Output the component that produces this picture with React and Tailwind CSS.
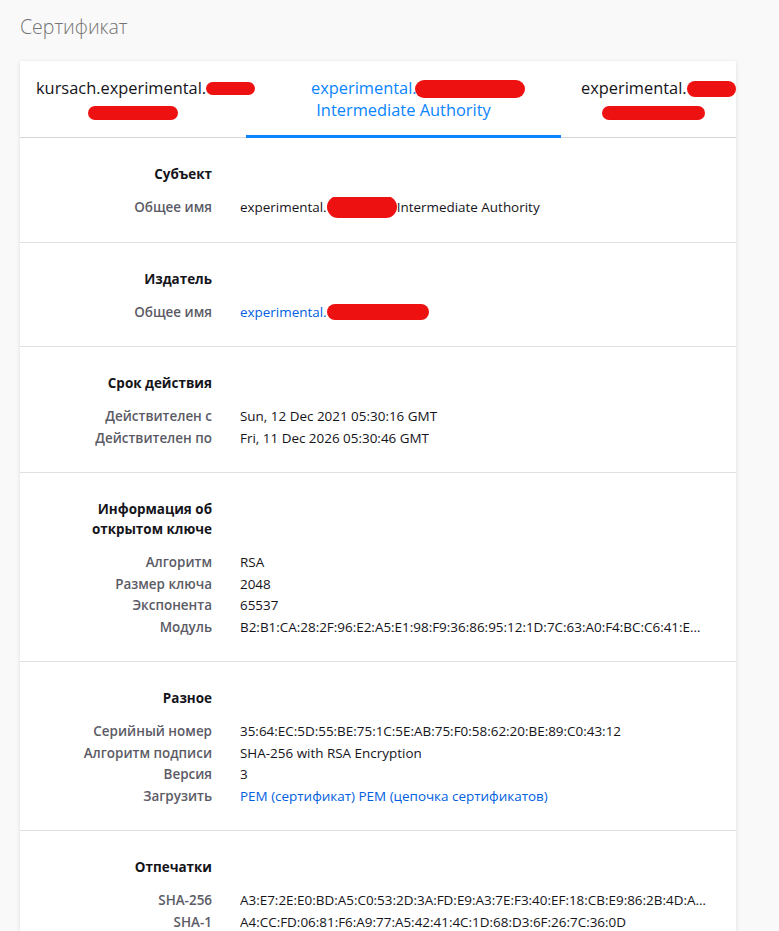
const Blot = ({ w, h = 14, className = '' }) => (
  <span
    className={`inline-block rounded-full bg-[#ee1111] blur-[0.6px] align-middle ${className}`}
    style={{ width: w, height: h }}
  />
)

function Row({ label, children }) {
  return (
    <>
      <div className="text-right font-semibold text-[#5b5b66]">{label}</div>
      <div className="min-w-0 truncate text-[#15141a]">{children}</div>
    </>
  )
}

function Section({ title, children }) {
  return (
    <div className="border-b border-[#e0e0e2] pt-[26px] pb-[23px] pr-[30px]">
      <div className="grid grid-cols-[192px_1fr] gap-x-[28px]">
        <div className="text-right font-bold leading-[20px] text-[#15141a]">{title}</div>
        <div />
      </div>
      <div className="mt-[13px] grid grid-cols-[192px_minmax(0,1fr)] gap-x-[28px] leading-[21.5px]">
        {children}
      </div>
    </div>
  )
}

export default function App() {
  return (
    <div
      className="min-h-screen bg-[#f9f9fa] px-[20px] pt-[12px] text-[13.45px]"
      style={{ fontFamily: '"Open Sans", "Noto Sans", sans-serif' }}
    >
      <h1 className="text-[19.5px] font-light leading-[30px] text-[#737373]">Сертификат</h1>

      <div className="mt-[19px] w-[716px] bg-white shadow-[0_1px_4px_rgba(12,12,13,0.12)]">
        {/* вкладки */}
        <div className="flex border-b border-[#d7d7db] text-[16.4px] leading-[22px]">
          <div className="w-[226px] py-[16px]">
            <div className="whitespace-nowrap pl-[16px] text-[#15141a]">
              kursach.experimental.<Blot w={49} h={13} className="-mt-[2px]" />
            </div>
            <div className="text-center">
              <Blot w={90} h={14} className="mt-[2px]" />
            </div>
          </div>
          <div className="relative w-[315px] py-[16px] text-[#0a84ff]">
            <div className="whitespace-nowrap pl-[65px]">
              experimental.<Blot w={110} h={18} className="-ml-[2px] -mt-[2px]" />
            </div>
            <div className="text-center">Intermediate Authority</div>
            <div className="absolute right-0 -bottom-px left-0 h-[3px] bg-[#0a84ff]" />
          </div>
          <div className="flex-1 py-[16px] text-[#15141a]">
            <div className="whitespace-nowrap pl-[20px]">
              experimental.<Blot w={49} h={16} className="-mt-[2px]" />
            </div>
            <div className="pl-[41px]">
              <Blot w={103} h={14} className="mt-[2px]" />
            </div>
          </div>
        </div>

        <Section title="Субъект">
          <Row label="Общее имя">
            experimental.
            <Blot w={70} h={22} className="-mt-[2px]" />
            Intermediate Authority
          </Row>
        </Section>

        <Section title="Издатель">
          <Row label="Общее имя">
            <span className="text-[#0060df]">experimental.</span>
            <Blot w={102} h={16} className="-mt-[1px]" />
          </Row>
        </Section>

        <Section title="Срок действия">
          <Row label="Действителен с">Sun, 12 Dec 2021 05:30:16 GMT</Row>
          <Row label="Действителен по">Fri, 11 Dec 2026 05:30:46 GMT</Row>
        </Section>

        <Section
          title={
            <>
              Информация об
              <br />
              открытом ключе
            </>
          }
        >
          <Row label="Алгоритм">RSA</Row>
          <Row label="Размер ключа">2048</Row>
          <Row label="Экспонента">65537</Row>
          <Row label="Модуль">
            B2:B1:CA:28:2F:96:E2:A5:E1:98:F9:36:86:95:12:1D:7C:63:A0:F4:BC:C6:41:E7:5A:90:3D:11:C4:8B
          </Row>
        </Section>

        <Section title="Разное">
          <Row label="Серийный номер">35:64:EC:5D:55:BE:75:1C:5E:AB:75:F0:58:62:20:BE:89:C0:43:12</Row>
          <Row label="Алгоритм подписи">SHA-256 with RSA Encryption</Row>
          <Row label="Версия">3</Row>
          <Row label="Загрузить">
            <span className="text-[#0060df]">PEM (сертификат) PEM (цепочка сертификатов)</span>
          </Row>
        </Section>

        <Section title="Отпечатки">
          <Row label="SHA-256">
            A3:E7:2E:E0:BD:A5:C0:53:2D:3A:FD:E9:A3:7E:F3:40:EF:18:CB:E9:86:2B:4D:A1:77:0C:E2:9B
          </Row>
          <Row label="SHA-1">A4:CC:FD:06:81:F6:A9:77:A5:42:41:4C:1D:68:D3:6F:26:7C:36:0D</Row>
        </Section>
      </div>
    </div>
  )
}
